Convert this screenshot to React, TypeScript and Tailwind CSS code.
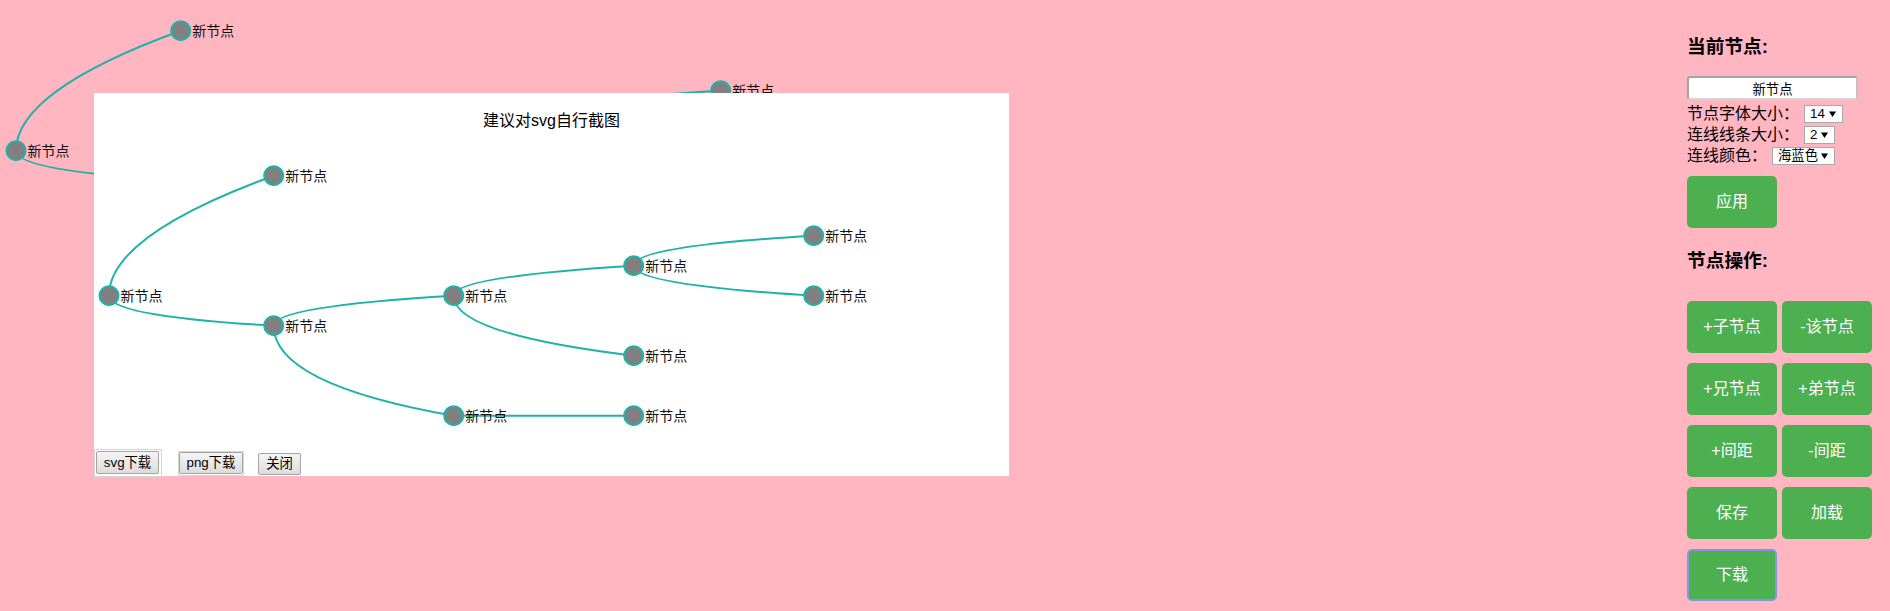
import * as React from "react";

const FONT = '"Liberation Sans", "Noto Sans CJK SC", sans-serif';

// node centres in the preview svg's own coordinates
const NODES: Record<string, [number, number]> = {
  a: [15, 147.7],
  b: [179.7, 27.7],
  c: [179.7, 177.7],
  d: [359.7, 147.7],
  e: [539.7, 117.7],
  f: [359.7, 267.7],
  g: [539.7, 207.7],
  h: [719.7, 87.7],
  i: [719.7, 147.7],
  j: [539.7, 267.7],
};

// source, target, how far the bend sits towards the target's y
const LINKS: [string, string, number][] = [
  ["a", "b", 0.5],
  ["a", "c", 0.68],
  ["c", "d", 0.65],
  ["c", "f", 0.65],
  ["d", "e", 0.63],
  ["d", "g", 0.64],
  ["e", "h", 0.65],
  ["e", "i", 0.63],
  ["f", "j", 0],
];

function Tree() {
  return (
    <>
      {LINKS.map(([s, t, r]) => {
        const [sx, sy] = NODES[s];
        const [tx, ty] = NODES[t];
        const k = sy + r * (ty - sy);
        return (
          <path
            key={`${s}-${t}`}
            d={`M${sx},${sy}Q${sx},${k} ${tx},${ty}`}
            fill="none"
            stroke="#20b2aa"
            strokeWidth={2}
          />
        );
      })}
      {Object.entries(NODES).map(([id, [x, y]]) => (
        <g key={id}>
          <circle cx={x} cy={y} r={9.5} fill="#808080" stroke="#20b2aa" strokeWidth={2} />
          <text
            x={x + 11.5}
            y={y}
            dominantBaseline="central"
            fontSize={14}
            fill="#111"
            style={{ fontFamily: FONT }}
          >
            新节点
          </text>
        </g>
      ))}
    </>
  );
}

function Select({ value, className }: { value: string; className: string }) {
  return (
    <span
      className={`ml-[5px] inline-flex h-[18px] items-center justify-between border border-[#a9a9a9] bg-white pl-[5px] pr-[6px] text-[13.33px] leading-none ${className}`}
    >
      <span>{value}</span>
      <svg width="7" height="6" viewBox="0 0 7 6">
        <polygon points="0,0.5 7,0.5 3.5,6" fill="#000" />
      </svg>
    </span>
  );
}

const OPS = ["+子节点", "-该节点", "+兄节点", "+弟节点", "+间距", "-间距", "保存", "加载", "下载"];

function PlainButton({ children, className = "" }: { children: React.ReactNode; className?: string }) {
  return (
    <button
      className={`flex h-[22px] items-center justify-center whitespace-nowrap rounded-[2px] border border-[#a3a3a3] bg-linear-to-b from-[#f5f5f5] to-[#dcdcdc] px-0 text-[13.33px] leading-none text-black ${className}`}
    >
      {children}
    </button>
  );
}

export default function App() {
  return (
    <div className="flex h-[611px] w-full overflow-hidden bg-[#ffb6c1] text-black" style={{ fontFamily: FONT }}>
      <div className="relative flex-1">
        <svg className="block h-[611px] w-full">
          <g transform="translate(1,3)">
            <Tree />
          </g>
        </svg>

        {/* export preview */}
        <div className="absolute left-[94px] top-[93px] flex h-[383px] w-[915px] flex-col bg-white">
          <div className="flex h-[55px] items-center justify-center text-[16px]">建议对svg自行截图</div>
          <svg className="block" width={915} height={301}>
            <Tree />
          </svg>
          <div className="flex h-[27px] items-start">
            <span className="border border-[#d6d6d6] pb-[2px] pl-[1px] pr-[2px] pt-[1px]">
              <PlainButton className="h-[23px] w-[63px]">svg下载</PlainButton>
            </span>
            <span className="ml-[16px] mt-[2px] border border-[#d6d6d6] pb-[1px]">
              <PlainButton className="w-[64px]">png下载</PlainButton>
            </span>
            <PlainButton className="ml-[14px] mt-[4px] w-[43px]">关闭</PlainButton>
          </div>
        </div>
      </div>

      <aside className="w-[203px] shrink-0 pt-[36px]">
        <h3 className="text-[18.72px] font-bold leading-[22px]">当前节点:</h3>
        <input
          readOnly
          defaultValue="新节点"
          className="mt-[18px] block h-[24px] w-[171px] rounded-[3px] border-2 border-[#a2a2a2] border-b-[#d4d4d4] border-r-[#c4c4c4] bg-white text-center text-[13.33px] outline-none"
          style={{ fontFamily: FONT }}
        />
        <div className="mt-[3px] text-[16px] leading-[21px]">
          <div className="flex h-[21px] items-center">
            节点字体大小：
            <Select value="14" className="w-[39px]" />
          </div>
          <div className="flex h-[21px] items-center">
            连线线条大小：
            <Select value="2" className="w-[31px]" />
          </div>
          <div className="flex h-[21px] items-center">
            连线颜色：
            <Select value="海蓝色" className="w-[63px]" />
          </div>
        </div>
        <button className="mt-[10px] block h-[52px] w-[90px] rounded-[5px] bg-[#4caf50] text-[16px] text-white">
          应用
        </button>

        <h3 className="mt-[22px] text-[18.72px] font-bold leading-[22px]">节点操作:</h3>
        <div className="mt-[29px] grid grid-cols-[90px_90px] gap-x-[5px] gap-y-[10px]">
          {OPS.map((op, i) => (
            <button
              key={op}
              className={`h-[52px] w-[90px] rounded-[5px] bg-[#4caf50] text-[16px] text-white ${
                i === OPS.length - 1 ? "border-2 border-[#8296e6]" : ""
              }`}
            >
              {op}
            </button>
          ))}
        </div>
      </aside>
    </div>
  );
}
